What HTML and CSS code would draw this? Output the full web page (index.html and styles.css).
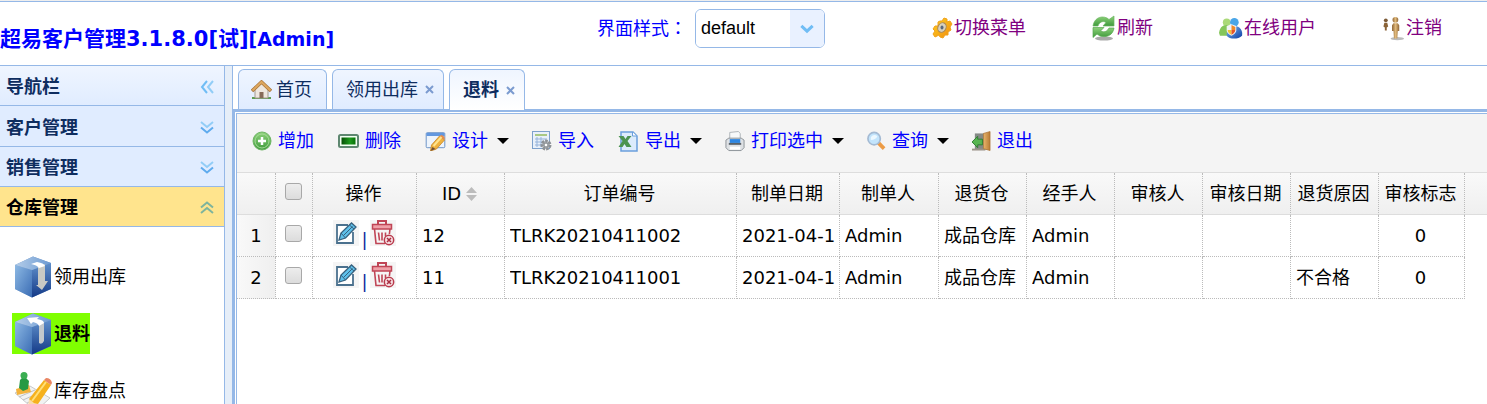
FILE: index.html
```html
<!DOCTYPE html>
<html lang="zh-CN">
<head>
<meta charset="utf-8">
<title>超易客户管理</title>
<link rel="stylesheet" href="styles.css">
</head>
<body>
<svg class="defs" aria-hidden="true">
  <defs>
    <linearGradient id="g-green" x1="0" y1="0" x2="0" y2="1"><stop offset="0" stop-color="#8ed27a"/><stop offset="1" stop-color="#3f9a3c"/></linearGradient>
    <linearGradient id="g-left" x1="0" y1="0" x2="1" y2="1"><stop offset="0" stop-color="#8db9e4"/><stop offset="1" stop-color="#3a6cb4"/></linearGradient>
    <linearGradient id="g-right" x1="0" y1="0" x2="0" y2="1"><stop offset="0" stop-color="#5f8fcb"/><stop offset="1" stop-color="#143a87"/></linearGradient>
    <linearGradient id="g-top" x1="0" y1="0" x2="1" y2="0"><stop offset="0" stop-color="#b4cde9"/><stop offset="1" stop-color="#6c9ad2"/></linearGradient>
    <linearGradient id="g-gold" x1="0" y1="0" x2="1" y2="1"><stop offset="0" stop-color="#ffd21e"/><stop offset="1" stop-color="#f08a10"/></linearGradient>
    <linearGradient id="g-man" x1="0" y1="0" x2="1" y2="0"><stop offset="0" stop-color="#8c6233"/><stop offset=".5" stop-color="#e2bb7c"/><stop offset="1" stop-color="#8c6233"/></linearGradient>
    <linearGradient id="g-blue" x1="0" y1="0" x2="1" y2="1"><stop offset="0" stop-color="#7fb9ee"/><stop offset="1" stop-color="#0c3ea6"/></linearGradient>
    <linearGradient id="g-bar" x1="0" y1="0" x2="1" y2="0"><stop offset="0" stop-color="#064f06"/><stop offset=".6" stop-color="#1d9a1d"/><stop offset="1" stop-color="#087008"/></linearGradient>
    <linearGradient id="g-door" x1="0" y1="0" x2="1" y2="0"><stop offset="0" stop-color="#e8b56c"/><stop offset="1" stop-color="#b97b35"/></linearGradient>
    <symbol id="i-down2" viewBox="0 0 14 13"><path d="M1 1l6 5 6-5" fill="none" stroke="#92cdf7" stroke-width="2"/><path d="M1 6.500l6 5 6-5" fill="none" stroke="#5fabee" stroke-width="2"/></symbol>
    <symbol id="i-edit" viewBox="0 0 26 26"><path d="M15 5H4v18h16V12" fill="#fff" stroke="#4b718e" stroke-width="1.800"/><path d="M6 20l2-7L18.500 3l4.500 4L12.500 18z" fill="#5fc0ea" stroke="#38627f" stroke-width="1.300"/><path d="M8 13l4.500 5M16.500 5l4.500 4M10.500 15.500L19.500 6.500" fill="none" stroke="#38627f" stroke-width="1"/></symbol>
    <symbol id="i-trash" viewBox="0 0 26 26"><path d="M8 4V1h8v3" fill="none" stroke="#c04556" stroke-width="2"/><rect x="2.500" y="4.500" width="19" height="4.500" fill="#efa0a8" stroke="#c04556" stroke-width="1.500"/><path d="M4.500 9l1.500 14.500h9M20 9l-.6 5M8.500 12.500l1 8M12 12.500v8M15.500 12.500v4" fill="none" stroke="#c04556" stroke-width="1.600"/><circle cx="19" cy="20" r="4.700" fill="#f7dfe2" stroke="#b93a4c" stroke-width="1.500"/><path d="M17 18l4 4M21 18l-4 4" stroke="#a92c40" stroke-width="1.500"/></symbol>
    <symbol id="i-box" viewBox="0 0 38 42"><path d="M19 .5L37 7v26L18 41.500 1 33V9z" fill="#6c94c5"/><path d="M1 9l17 5v27.500L1 33z" fill="url(#g-left)"/><path d="M18 14l19-7v26L18 41.500z" fill="url(#g-right)"/><path d="M1 9L19 .5 37 7l-19 7z" fill="url(#g-top)"/></symbol>
  </defs>
</svg>

<header class="topbar">
  <h1 class="brand">超易客户管理3.1.8.0[试]<small>[Admin]</small></h1>
  <div class="theme">
    <label for="theme">界面样式<span class="colon" lang="zh-TW">：</span></label>
    <span class="combo">
      <select id="theme"><option>default</option></select>
      <svg class="combo-arrow" viewBox="0 0 33 36"><path d="M0 0h33v36H0z" fill="#e9f1ff"/><path d="M11 15.500l5.500 5 5.500-5" fill="none" stroke="#70bdf5" stroke-width="3"/></svg>
    </span>
  </div>
  <a class="toplink" href="#">
    <svg width="22" height="24" viewBox="0 0 22 24"><path d="M9 5l2 0 2-3 3 1 0 3 3-1 2 3-2 3 1 3-3 2 0 3-3 0-2 3-3-1-1-2-4 2-2-3 2-3-2-2 2-3 3 0 0-4z" fill="url(#g-gold)" stroke="#f0a21c"/><ellipse cx="11" cy="11.500" rx="4" ry="5" fill="#d8d0bc" stroke="#a8875a" transform="rotate(25 11 11.500)"/><ellipse cx="11" cy="11.500" rx="1.500" ry="2" fill="#59677c"/></svg>
    切换菜单</a>
  <a class="toplink" href="#">
    <svg width="25" height="26" viewBox="0 0 25 26"><ellipse cx="13" cy="23.500" rx="9" ry="2" fill="#aaa"/><path d="M2 11C3 4 9 0 16 3l2 1.500L23 1v10H12l3-3.500C11 5 8 8 7 11z" fill="url(#g-green)" stroke="#6ab65f" stroke-width=".7"/><path d="M23 13c-1 7-7 10-14 8l-3-2-4 3.500V12.500h11L9.500 16c4 2 7 0 8.500-3z" fill="url(#g-green)" stroke="#57a850" stroke-width=".7"/></svg>
    刷新</a>
  <a class="toplink" href="#">
    <svg width="24" height="24" viewBox="0 0 25 24"><circle cx="8" cy="6" r="4" fill="#abd979"/><path d="M0 17c1-5 3-8 8-8 3 0 6 3 6 6l-6 5H1z" fill="#85c65a"/><circle cx="16" cy="6" r="4.500" fill="#4aa6e8"/><path d="M8 20c0-6 2-10 8-10 6 0 9 5 8 10-4 4-13 4-16 0z" fill="url(#g-blue)"/><path d="M13 8l5 2v5c-1 3-3 4-5 5-2-1-4-2-5-5v-5z" fill="#f2f4f6"/><path d="M13 9l4 2v3h-4z" fill="#f08a2b"/><path d="M9 14h4v5c-2-1-4-2-4-5z" fill="#f2c537"/><path d="M13 14h4c0 2-2 4-4 5z" fill="#e5552a"/></svg>
    在线用户</a>
  <a class="toplink" href="#">
    <svg width="24" height="25" viewBox="0 0 25 25"><ellipse cx="17" cy="23" rx="7" ry="1.700" fill="#bbb"/><circle cx="5" cy="4" r="2" fill="#7c5a36"/><path d="M3.500 6.500h3l1 4-1.500 1v3H4v-3l-1.500-1z" fill="#8a6338"/><circle cx="15" cy="3.500" r="3" fill="url(#g-man)"/><path d="M13 7h4.500l1.500 2v6h-1.500L17 23h-3.500L13 15h-1.500V9z" fill="url(#g-man)"/></svg>
    注销</a>
</header>

<div class="layout">
  <aside class="sidebar">
    <div class="nav-head nav-title"><span>导航栏</span>
      <button class="plain" aria-label="收起"><svg width="14" height="14" viewBox="0 0 14 14"><path d="M7 1L2 7l5 6" fill="none" stroke="#70bdf5" stroke-width="2"/><path d="M13 1L8 7l5 6" fill="none" stroke="#92cdf7" stroke-width="2"/></svg></button>
    </div>
    <div class="accordion">
      <button class="nav-head">客户管理<svg width="14" height="13"><use href="#i-down2"/></svg></button>
      <button class="nav-head">销售管理<svg width="14" height="13"><use href="#i-down2"/></svg></button>
      <button class="nav-head is-open">仓库管理<svg width="14" height="13" viewBox="0 0 14 13"><path d="M1 6.500l6-5 6 5M1 12l6-5 6 5" fill="none" stroke="#7eb49d" stroke-width="2"/></svg></button>
    </div>
    <nav class="menu">
      <a href="#"><svg width="38" height="42"><use href="#i-box"/><path d="M24 11l7-3v17h3l-6 9-6-5h2z" fill="#c8c9c4"/><path d="M17 8l6-2q7 1 8 4l-6 2q-2-3-8-4z" fill="#fff"/></svg>领用出库</a>
      <a class="current" href="#"><svg width="38" height="42"><use href="#i-box"/><path d="M25 12l5-3v19q-2 4-5 2z" fill="#c3c8cc"/><path d="M13 5l12-1-2 2q7 1 7 4l-5 3q-1-3-6-4l-2 2z" fill="#fff"/></svg>退料</a>
      <a href="#"><svg width="38" height="42" viewBox="0 0 38 42"><path d="M1 23l15-7 20 12-14 13z" fill="#f1f2f2" stroke="#c8cacb"/><path d="M5 27l16-7M9 30l16-7M13 33l15-7" stroke="#bfc2c4"/><path d="M2 19l13-4 2 7-14 3z" fill="#f3b33c"/><path d="M5 18l1-8 2-2h4l3 3-1 8-5 2z" fill="#259a43"/><circle cx="10" cy="5.500" r="3.500" fill="#3bae52"/><path d="M15 29L30 10l7 5-13 19-9 4z" fill="#f6b11d"/><path d="M18 31L32 12" stroke="#ffe07a" stroke-width="2"/><path d="M30 10l2-2q5 0 6 5l-1 2z" fill="#e98664"/><path d="M15 29l-1 9 10-4-4-1z" fill="#f9dcaa"/></svg>库存盘点</a>
    </nav>
  </aside>
  <div class="splitter"></div>

  <main class="main">
    <div class="tabs" role="tablist">
      <button class="tab tab-home" role="tab"><svg width="21" height="20" viewBox="0 0 21 20"><path d="M1 17h19v2H1z" fill="#5f9d52"/><path d="M4 9l6.500-6L17 9v9H4z" fill="#eee7df" stroke="#a4998d"/><path d="M1 11L10.500 2 20 11" fill="none" stroke="#a8743a" stroke-width="3.500"/><path d="M1.500 10.500L10.500 2l9 8.500" fill="none" stroke="#dda75f" stroke-width="2.200"/><path d="M8.500 18v-6h4v6z" fill="#876b59"/></svg>首页</button>
      <div class="tab"><button class="plain" role="tab">领用出库</button><button class="plain close" aria-label="关闭领用出库"><svg width="9" height="9" viewBox="0 0 9 9"><path d="M1 1l7 7M8 1L1 8" stroke="#7b9bd0" stroke-width="2"/></svg></button></div>
      <div class="tab selected"><button class="plain" role="tab" aria-selected="true">退料</button><button class="plain close" aria-label="关闭退料"><svg width="9" height="9" viewBox="0 0 9 9"><path d="M1 1l7 7M8 1L1 8" stroke="#7b9bd0" stroke-width="2"/></svg></button></div>
    </div>
    <section class="panel">
      <div class="grid-box">
        <div class="toolbar">
          <button class="tool"><svg width="20" height="20" viewBox="0 0 20 20"><circle cx="10" cy="10" r="9" fill="url(#g-green)" stroke="#6fb565"/><circle cx="10" cy="10" r="7" fill="none" stroke="#a5dc97"/><path d="M10 6v8M6 10h8" stroke="#fff" stroke-width="2.500"/></svg>增加</button>
          <button class="tool"><svg width="21" height="20" viewBox="0 0 21 20"><rect x="1" y="4" width="19" height="12" rx="1.500" fill="#f2fff2" stroke="#5e8770" stroke-width="2"/><rect x="3.500" y="6.500" width="14" height="7" fill="url(#g-bar)"/></svg>删除</button>
          <button class="tool"><svg width="21" height="20" viewBox="0 0 20 20"><rect x=".7" y="1.700" width="18.600" height="15" rx="1" fill="#edf4fc" stroke="#6d94c7"/><path d="M1 2h18v3H1z" fill="#6398df"/><path d="M6 14l8-9 5 4-8 9-6 2z" fill="#efb23e" stroke="#c6862a" stroke-width=".8"/><path d="M14 5l2-1q4 1 3 5z" fill="#e78b49"/><path d="M8 15l8-9" stroke="#ffe48e" stroke-width="2"/><path d="M5 20l2-4 3 2z" fill="#705038"/></svg>设计<svg class="caret" width="12" height="6" viewBox="0 0 12 6"><path d="M0 0h12L6 6z"/></svg></button>
          <button class="tool"><svg width="20" height="20" viewBox="0 0 20 20"><rect x=".5" y=".5" width="17" height="17" fill="#e8f0fa" stroke="#7da1cc"/><path d="M3 3h12v2H3z" fill="#a8c884"/><path d="M3 8h12M3 11h12M3 14h10M5 6v10M9 6v10" stroke="#95b3da" fill="none"/><circle cx="14" cy="14" r="4" fill="#b9bdc1" stroke="#8d9297" stroke-width="3" stroke-dasharray="2.500 1"/><circle cx="14" cy="14" r="2" fill="#fff" stroke="#7f858a"/></svg>导入</button>
          <button class="tool"><svg width="21" height="21" viewBox="0 0 20 21"><path d="M2.500 1h12l4 4v15h-16z" fill="#dcebfc" stroke="#6a9fdc" stroke-width="1.500"/><path d="M14 1v4h4" fill="#fff" stroke="#6a9fdc"/><path d="M0 5h5l2 3 2-3h4L9 10l4 6H8l-2-3-2 3H0l4-6z" fill="#4b9350"/></svg>导出<svg class="caret" width="12" height="6" viewBox="0 0 12 6"><path d="M0 0h12L6 6z"/></svg></button>
          <button class="tool"><svg width="20" height="21" viewBox="0 0 21 21"><path d="M5 1l9-1 2 2v8H5z" fill="#f7f9fa" stroke="#adb3b7"/><path d="M1 9l3-2h13l3 2v8l-3 3H4l-3-3z" fill="#dee1e4" stroke="#8b9197"/><path d="M5 8h11v4H5z" fill="#2d86e3"/><path d="M4 12h13v2H4z" fill="#5a6269"/><path d="M5 16h11v3H5z" fill="#fff"/></svg>打印选中<svg class="caret" width="12" height="6" viewBox="0 0 12 6"><path d="M0 0h12L6 6z"/></svg></button>
          <button class="tool"><svg width="19" height="20" viewBox="0 0 20 20"><path d="M12 12l6 6" stroke="#ec9b45" stroke-width="4"/><circle cx="7.500" cy="7.500" r="6.500" fill="#c2e4fc" stroke="#a4bad3" stroke-width="1.800"/><path d="M4 6q3-4 7-1-2 4-7 4z" fill="#ecf8ff"/></svg>查询<svg class="caret" width="12" height="6" viewBox="0 0 12 6"><path d="M0 0h12L6 6z"/></svg></button>
          <button class="tool"><svg width="19" height="21" viewBox="0 0 20 21"><path d="M3 2h14v17H3z" fill="#858a87"/><path d="M0 18h14v2H0z" fill="#9b9389"/><path d="M12 2l7-2v20l-7-2z" fill="url(#g-door)" stroke="#a86f33" stroke-width=".7"/><path d="M0 11l6-6v3h5v6H6v3z" fill="#57b451" stroke="#2f7d32"/></svg>退出</button>
        </div>
        <table class="grid">
          <colgroup><col class="w-no"><col class="w-check"><col class="w-op"><col class="w-std"><col class="w-order"><col class="w-date"><col class="w-maker"><col class="w-std"><col class="w-std"><col class="w-std"><col class="w-std"><col class="w-std"><col class="w-flag"><col></colgroup>
          <thead>
            <tr><th></th><th><input type="checkbox" aria-label="全选"></th><th>操作</th><th>ID<svg class="sort" width="11" height="14" viewBox="0 0 11 14"><path d="M0 6l5.500-6L11 6zM0 8h11l-5.500 6z" fill="#bcbcbc"/></svg></th><th>订单编号</th><th>制单日期</th><th>制单人</th><th>退货仓</th><th>经手人</th><th>审核人</th><th>审核日期</th><th>退货原因</th><th>审核标志</th><th class="rest"></th></tr>
          </thead>
          <tbody>
            <tr><td class="no">1</td><td class="mid"><input type="checkbox" aria-label="选择第1行"></td><td><div class="ops"><a href="#" aria-label="编辑"><svg width="26" height="26"><use href="#i-edit"/></svg></a><span>|</span><a href="#" aria-label="删除"><svg width="26" height="26"><use href="#i-trash"/></svg></a></div></td><td><div class="cell">12</div></td><td><div class="cell">TLRK20210411002</div></td><td><div class="cell">2021-04-1</div></td><td><div class="cell">Admin</div></td><td><div class="cell">成品仓库</div></td><td><div class="cell">Admin</div></td><td></td><td></td><td></td><td class="mid">0</td><td class="rest"></td></tr>
            <tr><td class="no">2</td><td class="mid"><input type="checkbox" aria-label="选择第2行"></td><td><div class="ops"><a href="#" aria-label="编辑"><svg width="26" height="26"><use href="#i-edit"/></svg></a><span>|</span><a href="#" aria-label="删除"><svg width="26" height="26"><use href="#i-trash"/></svg></a></div></td><td><div class="cell">11</div></td><td><div class="cell">TLRK20210411001</div></td><td><div class="cell">2021-04-1</div></td><td><div class="cell">Admin</div></td><td><div class="cell">成品仓库</div></td><td><div class="cell">Admin</div></td><td></td><td></td><td><div class="cell">不合格</div></td><td class="mid">0</td><td class="rest"></td></tr>
          </tbody>
        </table>
      </div>
    </section>
  </main>
</div>
</body>
</html>
```
FILE: styles.css
```css
* { box-sizing: border-box; }

html, body { height: 100%; }

body {
  margin: 0;
  display: flex;
  flex-direction: column;
  overflow: hidden;
  background: #fff;
  color: #000;
  font: 18px/24px "DejaVu Sans", "Noto Sans CJK SC", sans-serif;
}

button { font: inherit; cursor: pointer; }
a { text-decoration: none; }
svg { flex: none; }

.defs { position: absolute; width: 0; height: 0; }

.plain {
  display: flex;
  margin: 0;
  padding: 0;
  border: 0;
  background: none;
  color: inherit;
}

/* Top bar */
.topbar {
  flex: none;
  display: grid;
  grid-template-columns: minmax(0, 597fr) minmax(0, 334fr) minmax(0, 160fr) minmax(0, 128fr) minmax(0, 162fr) minmax(0, 106fr);
  height: 66px;
  border-top: 1px solid #eee;
  border-bottom: 1px solid #95b8e7;
  box-shadow: inset 0 1px #95b8e7;
  white-space: nowrap;
}

.brand {
  margin: 0;
  padding-top: 26px;
  color: #00f;
  font-size: 21px;
  line-height: 24px;
}
.brand small { font-size: 19px; }

.theme {
  display: flex;
  align-items: center;
  gap: 8px;
  height: 54px;
  color: #00f;
}
.colon { font-family: "Noto Sans CJK TC", sans-serif; }

.combo {
  position: relative;
  width: 130px;
  height: 39px;
  border: 1px solid #95b8e7;
  border-radius: 6px;
  overflow: hidden;
}
.combo select {
  appearance: none;
  width: 100%;
  height: 100%;
  padding: 0 36px 0 5px;
  border: 0;
  background: #fff;
  color: #000;
  font: 18px "Liberation Sans", sans-serif;
}
.combo-arrow {
  position: absolute;
  top: 0;
  right: 0;
  width: 34px;
  height: 37px;
  pointer-events: none;
}

.toplink {
  display: flex;
  align-items: center;
  gap: 1px;
  height: 54px;
  color: #800080;
}

/* Layout */
.layout { flex: 1; display: flex; min-height: 0; }

.sidebar {
  flex: none;
  width: 225px;
  border-right: 1px solid #95b8e7;
  overflow: hidden;
}

.splitter { flex: none; width: 7px; background: #e6eef8; }

.nav-head {
  display: flex;
  align-items: center;
  justify-content: space-between;
  width: 100%;
  height: 40px;
  padding: 2px 10px 0 6px;
  border: 0;
  border-bottom: 1px solid #95b8e7;
  background: #e0ecff;
  color: #0e2d5f;
  font-weight: bold;
}
.nav-title { background: linear-gradient(#eff5ff, #e0ecff); }
.nav-head.is-open { background: #ffe48d; color: #000; }

.accordion { padding-top: 1px; background: #e0ecff; }

.menu {
  display: flex;
  flex-direction: column;
  align-items: flex-start;
  gap: 16px;
  padding: 29px 0 0 12px;
}
.menu a {
  display: flex;
  align-items: center;
  gap: 2px;
  height: 41px;
  padding-left: 2px;
  color: #000;
}
.menu .current { background: #80ff00; font-weight: bold; }

/* Tabs */
.main {
  flex: 1;
  display: flex;
  flex-direction: column;
  min-width: 0;
}

.tabs {
  flex: none;
  display: flex;
  gap: 5px;
  height: 43px;
  padding: 3px 5px 0;
  border-left: 1px solid #95b8e7;
}

.tab {
  display: flex;
  align-items: center;
  gap: 7px;
  padding: 0 9px 0 13px;
  border: 1px solid #95b8e7;
  border-bottom: 0;
  border-radius: 6px 6px 0 0;
  background: linear-gradient(#eff5ff, #e0ecff);
  color: #0e2d5f;
}
.tab-home { gap: 4px; padding: 0 14px 0 12px; }
.tab.selected {
  margin-bottom: -1px;
  background: linear-gradient(#eff5ff, #fff);
  font-weight: bold;
  z-index: 1;
}

.panel {
  flex: 1;
  min-height: 0;
  padding: 1px 0 0 1px;
  border-top: 3px solid #95b8e7;
  border-left: 3px solid #95b8e7;
}

.grid-box {
  height: 100%;
  border-top: 1px solid #95b8e7;
  border-left: 1px solid #95b8e7;
}

/* Toolbar */
.toolbar {
  display: flex;
  align-items: center;
  gap: 24px;
  height: 59px;
  padding: 0 15px 4px;
  border-bottom: 1px solid #ddd;
  background: #f4f4f4;
}

.tool {
  display: flex;
  align-items: center;
  gap: 6px;
  padding: 0;
  border: 0;
  background: none;
  color: #00f;
  white-space: nowrap;
}
.tool .caret { margin-left: 3px; margin-right: -1px; }

/* Data grid */
.grid {
  width: 100%;
  table-layout: fixed;
  border-collapse: separate;
  border-spacing: 0;
}

.w-no { width: 39px; }
.w-check { width: 37px; }
.w-op { width: 104px; }
.w-std { width: 88px; }
.w-order { width: 232px; }
.w-date { width: 103px; }
.w-maker { width: 99px; }
.w-flag { width: 86px; }

.grid th,
.grid td {
  height: 42px;
  padding: 0;
  border-right: 1px dotted #bbb;
  border-bottom: 1px dotted #bbb;
  white-space: nowrap;
}
.grid thead tr { background: linear-gradient(#f9f9f9, #efefef); }
.grid th { padding-right: 2px; border-bottom: 1px solid #ddd; font-weight: normal; }
.grid td.rest { border: 0; }
.grid th.rest { border-right: 0; }
.grid td.no { background: linear-gradient(90deg, #f9f9f9, #efefef); text-align: center; }
.grid td.mid { padding-right: 2px; text-align: center; }

.cell { margin: 0 2px 0 5px; overflow: hidden; }

.sort { margin-left: 5px; vertical-align: -1px; }

.ops {
  display: flex;
  justify-content: center;
  align-items: flex-start;
  gap: 2px;
  height: 32px;
  color: #0e2d9f;
}
.ops a { display: flex; background: #f5f5f5; }
.ops span { padding-top: 8px; }

.grid input {
  appearance: none;
  display: block;
  width: 17px;
  height: 17px;
  margin: 0 auto 4px;
  border: 1px solid #a8a8a8;
  border-radius: 3px;
  background: linear-gradient(#ededed, #dcdcdc);
}
```
